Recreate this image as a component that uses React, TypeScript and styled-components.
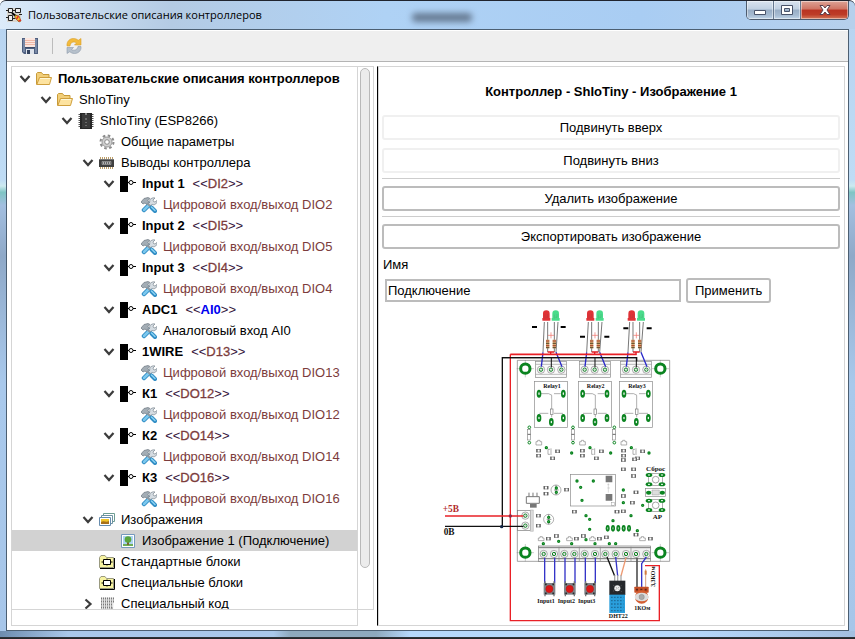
import React from 'react';
import styled, { createGlobalStyle } from 'styled-components';

const GlobalStyle = createGlobalStyle`
  *, *::before, *::after { box-sizing: border-box; }
  html, body { margin: 0; padding: 0; }
  body { font-family: "Liberation Sans", Arial, sans-serif; font-size: 13px; color: #000; }
  button, input { font: inherit; color: inherit; }
`;

/* ---------- Window frame ---------- */

const Window = styled.div`
  display: flex;
  flex-direction: column;
  height: 100vh;
  padding: 0 6px 8px;
  overflow: hidden;
  border-top: 1px solid #20242e;
  border-radius: 6px 6px 0 0;
  background:
    linear-gradient(#33363b, #1f2125) bottom / 100% 2px no-repeat,
    linear-gradient(90deg, #6d8cae 0, #a9c8ea 8%, #a9c8ea 32%, #8ea9bd 34%, #8ea9bd 44%, #b6d8fb 48%, #b6d8fb 80%, #a3bfe0 100%) bottom / 100% 8px no-repeat,
    linear-gradient(90deg, #dcebfa 0, #b4cbe4 20%, #afd2f5 45%, #a9cdf3 75%, #b6d0ec 100%) top / 100% 28px no-repeat,
    linear-gradient(#b7d3f0 0, #bfdcf5 28%, #cdeaf0 29%, #7fc5c4 30%, #a3bfe0 32%, #8fa9c8 40%, #a9c9ec 60%, #a7c6e9 100%);
`;

const TitleBar = styled.header`
  display: flex;
  align-items: flex-start;
  height: 28px;
  flex: none;
`;

const AppTitle = styled.h1`
  flex: 1;
  display: flex;
  align-items: center;
  gap: 6px;
  height: 28px;
  margin: 0;
  font: 400 11px/16px "Open Sans", "Noto Sans", sans-serif;
  white-space: nowrap;
`;

const GlassSmudge = styled.span`
  width: 60px;
  height: 9px;
  margin: 4px 0 0 144px;
  border-radius: 4px;
  background: #667a92;
  filter: blur(3px);
`;

const Caption = styled.div`
  display: flex;
  height: 19px;
  border: 1px solid #4d5b6e;
  border-top: 0;
  border-radius: 0 0 5px 5px;
  overflow: hidden;
`;

const CaptionButton = styled.button<{ $close?: boolean }>`
  display: flex;
  align-items: center;
  justify-content: center;
  width: ${p => (p.$close ? 47 : 27)}px;
  padding: 0;
  border: 0;
  border-right: ${p => (p.$close ? '0' : '1px solid #66788f')};
  box-shadow: inset 0 0 0 1px rgba(255, 255, 255, 0.45);
  background: ${p =>
    p.$close
      ? 'linear-gradient(#dda396 0, #cf7463 45%, #b93322 50%, #bd3c27 75%, #d3785a 100%)'
      : 'linear-gradient(#d9e3ef 0, #c0d0e2 45%, #98adc5 50%, #a7bcd3 80%, #c1d5e9 100%)'};
`;

const Client = styled.main`
  flex: 1;
  min-height: 0;
  display: flex;
  flex-direction: column;
  border: 1px solid #4c5f72;
  background: #fff;
`;

const Toolbar = styled.div`
  display: flex;
  align-items: center;
  gap: 13px;
  flex: none;
  height: 32px;
  padding: 0 15px;
  border-top: 1px solid #fff;
  border-bottom: 1px solid #b4b4b4;
  background: #efefef;
`;

const ToolButton = styled.button`
  display: flex;
  padding: 0;
  border: 0;
  background: none;
`;

const ToolSeparator = styled.span`
  width: 1px;
  height: 16px;
  margin: 0 0 0 1px;
  background: #bcbcbc;
`;

const Body = styled.div`
  flex: 1;
  min-height: 0;
  display: flex;
  padding: 4px 3px 4px 4px;
`;

/* ---------- Tree ---------- */

const TreePanel = styled.section`
  flex: 0 0 363px;
  min-width: 0;
  display: flex;
  flex-direction: column;
`;

const TreeScroll = styled.div`
  flex: 1;
  min-height: 0;
  display: flex;
  border: 1px solid #d5d5d5;
`;

const Tree = styled.ul`
  flex: 1;
  min-width: 0;
  margin: 0;
  padding: 1px 0 0;
  list-style: none;
  overflow: hidden;
  border-right: 1px solid #d5d5d5;
`;

const Track = styled.div`
  flex: none;
  width: 15px;
  padding: 1px 2px 41px;
`;

const Thumb = styled.div`
  height: 100%;
  width: 10px;
  border: 1px solid #b9b9b9;
  border-radius: 5px;
  background: #ececec;
`;

const TreeFooter = styled.div`
  flex: none;
  width: 347px;
  height: 16px;
  border: 1px solid #d5d5d5;
  border-top: 0;
`;

const TreeRow = styled.li<{ $level: number; $selected?: boolean }>`
  display: flex;
  align-items: center;
  height: 21px;
  padding-left: ${p => 5 + p.$level * 21}px;
  white-space: nowrap;
  background: ${p => (p.$selected ? '#d2d2d2' : 'transparent')};
`;

const Toggle = styled.button`
  display: flex;
  width: 16px;
  margin-right: 3px;
  padding: 0;
  border: 0;
  background: none;
`;

const ToggleSpace = styled.span`
  width: 19px;
`;

const Label = styled.span<{ $bold?: boolean; $linked?: boolean }>`
  margin-left: 6px;
  line-height: 21px;
  font-weight: ${p => (p.$bold ? 700 : 400)};
  color: ${p => (p.$linked ? '#7c3c3c' : '#000')};
`;

const Binding = styled.span`
  margin-left: 8px;
  line-height: 21px;
  color: #33133a;
`;

const Pin = styled.span<{ $analog?: boolean }>`
  color: ${p => (p.$analog ? '#0000f0' : '#7c3c3c')};
  font-weight: ${p => (p.$analog ? 700 : 400)};
  -webkit-text-stroke: ${p => (p.$analog ? '0' : '0.3px #7c3c3c')};
`;

/* ---------- Details ---------- */

const Details = styled.section`
  flex: 1;
  min-width: 0;
  display: flex;
  flex-direction: column;
  margin-left: 3px;
  border: 1px solid #d5d5d5;
  border-left: 1px solid #000;
  box-shadow: inset 1px 0 #d5d5d5;
  padding: 15px 4px 0;
`;

const Heading = styled.h2`
  margin: 0 0 13px;
  font-size: 13px;
  line-height: 20px;
  text-align: center;
`;

const ActionButton = styled.button<{ $muted?: boolean }>`
  flex: none;
  height: 25px;
  padding: 0 7px;
  border: 2px solid ${p => (p.$muted ? '#f0f0f0' : '#bcbcbc')};
  border-radius: 3px;
  background: #fff;
  line-height: 20px;
`;

const Stack = styled.div`
  display: flex;
  flex-direction: column;
  gap: 8px;
`;

const Rule = styled.hr`
  width: 100%;
  height: 1px;
  margin: 5px 0 7px;
  border: 0;
  background: #cdcdcd;
`;

const NameLabel = styled.label`
  margin: 6px 0 3px 1px;
  line-height: 20px;
`;

const NameRow = styled.form`
  display: flex;
  align-items: center;
  gap: 5px;
  padding-left: 3px;
`;

const NameInput = styled.input`
  flex: 0 1 296px;
  min-width: 0;
  height: 23px;
  padding: 0 1px;
  border: 2px solid #bcbcbc;
  outline: 0;
  background: #fff;
`;

const BoardBox = styled.figure`
  flex: 1;
  min-height: 0;
  display: flex;
  justify-content: center;
  align-items: flex-start;
  margin: 5px 0 0;
  overflow: hidden;
`;

/* ---------- Icons ---------- */

const Icon = ({ children }: { children: React.ReactNode }) => (
  <svg width="16" height="16" viewBox="0 0 16 16" aria-hidden="true">{children}</svg>
);

const AppIcon = () => (
  <svg width="16" height="16" viewBox="0 0 16 16" aria-hidden="true">
    <path d="M1 1h14v14H1z" fill="#d9d6d0" />
    <path d="M2.500 1.500h4v4h-4zM9.500 1.500h5v4h-5zM2.500 8.500h4v5h-4z" fill="#eee" stroke="#222" />
    <path d="M0 3.500h2M0 10.500h2M7 3.500h2M6 11.500h3M13 7.500h3" stroke="#222" />
    <path d="M6 6l5 4" stroke="#000" strokeWidth="2" />
    <path d="M9 8l4 1 2 5-2 1-4-4z" fill="#f5c22a" stroke="#6b4a10" strokeWidth=".6" />
    <path d="M10.500 12l2-3M12.500 14l2.500-1" stroke="#e3302c" strokeWidth="1.500" />
  </svg>
);

const SaveIcon = () => (
  <Icon>
    <path d="M0 0h16v16H2L0 14z" fill="#4f6080" />
    <path d="M1 1h2v13H1zM13 1h2v14h-2z" fill="#7888a5" />
    <path d="M3 0h10v9H3z" fill="#fbe6df" />
    <path d="M3 2.500h10M3 4.500h10M3 6.500h10" stroke="#f0b8a6" />
    <path d="M3 9h10v1H3z" fill="#3d4c68" />
    <path d="M4 11h8v5H4z" fill="#dfe4ec" />
    <path d="M5 12h3v4H5z" fill="#35445f" />
  </Icon>
);

const RefreshIcon = () => (
  <Icon>
    <path d="M1 8C.500 3 4 .500 7.500.500c2 0 3.500.700 4.700 1.800L15 .500V7H8.500l2-2C8 3 4.500 4 4 8z" fill="#f3ba3c" stroke="#d9a02a" strokeWidth=".6" />
    <path d="M15 8.500c.500 4.500-3 7-6.500 7-2 0-3.500-.700-4.700-1.800L1 15.500V9.500h6.500l-2 2c2.500 1.500 6 .500 6.500-3z" fill="#b6c0cb" stroke="#8e9bab" strokeWidth=".6" />
  </Icon>
);

const Chevron = ({ open }: { open: boolean }) => (
  <Icon>
    <path d={open ? 'M3.500 5l4.500 5 4.500-5' : 'M5.500 3.500L10.500 8l-5 4.500'} fill="none" stroke="#3c3c3c" strokeWidth="2.200" />
  </Icon>
);

const FolderIcon = () => (
  <Icon>
    <path d="M.500 13.500v-11l1-1h4l1.500 2H13v3" fill="#f2cf7a" stroke="#c79a38" />
    <path d="M.800 13.500L3.500 6.500h12L13.500 13.500z" fill="#fde3a0" stroke="#cf9f3d" />
    <path d="M4 7.500h10" stroke="#fff8d6" />
  </Icon>
);

const ChipIcon = () => (
  <Icon>
    <path d="M.500 1.500h2M.500 3.500h2M.500 5.500h2M.500 7.500h2M.500 9.500h2M.500 11.500h2M.500 13.500h2M13.500 1.500h2M13.500 3.500h2M13.500 5.500h2M13.500 7.500h2M13.500 9.500h2M13.500 11.500h2M13.500 13.500h2" stroke="#555" />
    <path d="M2 0h12v16H2z" fill="#272727" />
    <path d="M4 1h8v14H4z" fill="#3b3b3b" />
    <path d="M7 0h2v2H7z" fill="#888" />
    <path d="M8 5v2M8 9v1M8 12v1" stroke="#999" />
  </Icon>
);

const GearIcon = () => (
  <Icon>
    <circle cx="8" cy="8" r="6.500" fill="none" stroke="#8c8c8c" strokeWidth="2" strokeDasharray="2.600 2.500" />
    <circle cx="8" cy="8" r="5" fill="#d0d0d0" stroke="#9a9a9a" />
    <circle cx="8" cy="8" r="2.300" fill="#fff" stroke="#8c8c8c" />
  </Icon>
);

const PinsIcon = () => (
  <Icon>
    <path d="M1.500 2v12M3.500 2v12M5.500 2v12M7.500 2v12M9.500 2v12M11.500 2v12M13.500 2v12" stroke="#bd9e68" />
    <path d="M0 4h15v8H0z" fill="#3f3f3f" />
    <path d="M0 4.500h15" stroke="#777" />
    <path d="M3 6.500h9v3H3z" fill="#666" stroke="#aaa" strokeWidth=".6" />
    <path d="M4 8h1m1 0h1m1 0h1m1 0h1" stroke="#fff" />
  </Icon>
);

const PortIcon = () => (
  <Icon>
    <path d="M0 0h8v16H0z" fill="#000" />
    <path d="M8 6.500h1M13 6.500h3" stroke="#000" />
    <circle cx="11" cy="6.500" r="2" fill="#fff" stroke="#000" />
  </Icon>
);

const ToolsIcon = () => (
  <Icon>
    <path d="M9 7l-6 6" stroke="#2f8cc4" strokeWidth="4.500" strokeLinecap="round" />
    <path d="M9 7l-6 6" stroke="#7cc8ee" strokeWidth="2.500" strokeLinecap="round" />
    <path d="M14 1l-2 2 .500 1.500L14 5l1.800-1.500c.500 3-2 5-4.500 4L9 9 7 7l1.800-2C8 2.500 11 .200 14 1z" fill="#d5dce2" stroke="#7b868f" strokeWidth=".7" />
    <path d="M0 5l3-3.500L7 .500l2 1-2 2 1 2-2 2-2-1.500L2 7z" fill="#a3adb5" stroke="#6b767f" strokeWidth=".7" />
    <path d="M6 6l4 4" stroke="#8d98a1" strokeWidth="2" />
    <path d="M10.500 10.500l3.500 3.500" stroke="#2f8cc4" strokeWidth="4" strokeLinecap="round" />
    <path d="M10.500 10l3.500 3.500" stroke="#8ad2f3" strokeWidth="1.500" strokeLinecap="round" />
  </Icon>
);

const ImagesIcon = () => (
  <Icon>
    <path d="M4.500 1.500h11v8h-11z" fill="#fff" stroke="#6d9c92" />
    <path d="M2.500 3.500h11v8h-11z" fill="#fff" stroke="#6d93a2" />
    <path d="M.500 5.500h11v8H.500z" fill="#fff" stroke="#668cae" />
    <path d="M2 7h8v5H2z" fill="#f2c52a" />
    <path d="M2 10c3-2 5 1 8-1v3H2z" fill="#a8701a" />
  </Icon>
);

const ImageIcon = () => (
  <Icon>
    <path d="M1.500 1.500h13v13h-13z" fill="#fff" stroke="#7699bd" />
    <path d="M3 3h10v10H3z" fill="#aed4f2" />
    <path d="M3 11h10v2H3z" fill="#70ae55" />
    <path d="M7 9h2v3H7z" fill="#7b6237" />
    <circle cx="8" cy="6.500" r="3.300" fill="#5aa53c" />
  </Icon>
);

const BlockIcon = () => (
  <Icon>
    <path d="M.500 13.500v-10l1.500-2h4l1.500 2h7v10z" fill="#f7f3a0" stroke="#9a9a80" />
    <path d="M1 14.500h14.500V4" fill="none" stroke="#000" />
    <path d="M4.500 5.500h7v5h-7z" fill="#fff" stroke="#000" />
    <path d="M2.500 8h2M11.500 8h2M8 4.500v1M8 10.500v1" stroke="#000" />
  </Icon>
);

const CodeIcon = () => (
  <Icon>
    <path d="M2 1.500h13l-1 13-12-1z" fill="#e3e3e3" />
    <path d="M2 2.500h13M2 5.500h13M2 8.500h12M2 11.500h12M4 14.500h7" stroke="#7b7b7b" strokeWidth="2" strokeDasharray="1 1" />
    <path d="M10 14l4-3-1 4z" fill="#999" />
  </Icon>
);

/* ---------- Wiring drawing ---------- */

const BoardText = styled.text<{ $size?: number; $red?: boolean }>`
  font-family: "Liberation Serif", "Times New Roman", serif;
  font-weight: 700;
  font-size: ${p => p.$size ?? 18}px;
  fill: ${p => (p.$red ? '#b22a2a' : '#111')};
`;

const GREEN = '#0b8420';

const Ring = ({ x, y }: { x: number; y: number }) => (
  <g fill="none">
    <circle cx={x} cy={y} r="11" fill="#f6f6f6" stroke="#888" strokeWidth="2" />
    <circle cx={x} cy={y} r="5" stroke={GREEN} strokeWidth="3" />
    <path d={`M${x - 5} ${y + 5}l10-10`} stroke="#666" strokeWidth="1" />
  </g>
);

const Mount = ({ x, y }: { x: number; y: number }) => (
  <g>
    <path d={`M${x - 26} ${y}h52M${x} ${y - 26}v52`} stroke="#666" />
    <circle cx={x} cy={y} r="14" fill="#fff" stroke={GREEN} strokeWidth="9" />
  </g>
);

const Oval = ({ x, y }: { x: number; y: number }) => (
  <g>
    <ellipse cx={x} cy={y} rx="7" ry="12" fill={GREEN} />
    <ellipse cx={x} cy={y} rx="2" ry="4" fill="#fff" />
  </g>
);

const Part = ({ x, y }: { x: number; y: number }) => (
  <g>
    <rect x={x - 6} y={y - 4} width="12" height="8" fill="#fff" stroke="#888" strokeWidth="2" />
    <path d={`M${x - 5} ${y - 5}v10M${x + 5} ${y - 5}v10`} stroke="#666" strokeWidth="4" />
  </g>
);

const Via = ({ x, y }: { x: number; y: number }) => (
  <circle cx={x} cy={y} r="3" fill="#a8d5a8" stroke={GREEN} strokeWidth="4" />
);

const Led = ({ x, color }: { x: number; color: string }) => (
  <g>
    <path d={`M${x - 10} 61V41q0-10 10-10t10 10v20z`} fill={color} />
    <path d={`M${x - 12} 58h24`} stroke={color} strokeWidth="8" />
    <path d={`M${x - 4} 44v12M${x + 4} 42v10h-5`} fill="none" stroke="#555" opacity=".5" />
  </g>
);

const Resistor = ({ x }: { x: number }) => (
  <g>
    <path d={`M${x} 66v90`} stroke="#777" strokeWidth="3" />
    <rect x={x - 5} y="119" width="10" height="26" fill="#d8a873" />
    <path d={`M${x - 5} 123h10M${x - 5} 137h10`} stroke="#a03d27" strokeWidth="3" />
    <path d={`M${x - 5} 130h10M${x - 5} 143h10`} stroke="#574527" strokeWidth="3" />
  </g>
);

type RelayProps = { x: number; led: number; name: string; dash: [number, number, number]; screw: number };

const Relay = ({ x, led, name, dash, screw }: RelayProps) => (
  <g>
    <path d={`M${led - 6} 66L${screw + 6} 157M${led + 35} 66L${screw + 45} 157`} fill="none" stroke="#777" strokeWidth="3" />
    <Resistor x={led + 4} />
    <Resistor x={led + 24} />
    <Led x={led} color="#e03236" />
    <Led x={led + 28} color="#49dc8b" />
    <path d={`M${dash[0]} ${dash[2]}h15M${dash[1]} ${dash[2]}h15`} stroke="#000" strokeWidth="6" />
    <path d={`M${led + 5} 106h18M${led + 14} 97v18`} stroke="#ee6a60" strokeWidth="2" />
    <path d={`M${led + 4} 156h20M${led + 13} 157v7`} stroke="#e01b22" strokeWidth="4" />
    <rect x={screw - 16} y="185" width="93" height="48" fill="#fafafa" stroke="#888" strokeWidth="2" />
    <path d={`M${screw - 16} 193h93M${screw - 16} 223h93`} stroke="#999" strokeWidth="2" />
    <Ring x={screw} y={209} />
    <Ring x={screw + 30} y={209} />
    <Ring x={screw + 61} y={209} />
    <path d={`M${screw + 6} 157l-5 43M${screw + 45} 157l18 43`} stroke="#2929c9" strokeWidth="4" />
    <path d={`M${screw + 31} 173v29`} stroke="#111" strokeWidth="3" />
    <rect x={x} y="244" width="99" height="138" fill="#fff" stroke="#888" strokeWidth="2" />
    <BoardText x={x + 52} y="263" textAnchor="middle">{name}</BoardText>
    <path d={`M${x + 18} 281h24l10 5M${x + 58} 281h20M${x + 51} 286v66M${x + 14} 340h27M${x + 58} 340h27`} fill="none" stroke="#888" strokeWidth="2" />
    <rect x={x + 47} y="327" width="8" height="17" fill="#fff" stroke="#777" strokeWidth="2" />
    <Oval x={x + 13} y={281} />
    <Oval x={x + 86} y={281} />
    <Oval x={x + 13} y={354} />
    <Oval x={x + 50} y={366} />
    <Oval x={x + 86} y={354} />
    <rect x={x - 21} y="388" width="9" height="32" fill="#fff" stroke="#888" strokeWidth="2" />
    <path d={`M${x - 21} 403h9`} stroke="#666" strokeWidth="3" />
    <circle cx={x - 16} cy="382" r="4" fill="#fff" stroke={GREEN} strokeWidth="3" />
    <circle cx={x - 16} cy="428" r="4" fill="#fff" stroke={GREEN} strokeWidth="3" />
    <path d={`M${x + 4} 425v10h17v-10h-5v-4h-7v4zM${x + 46} 448h-6v15h6M${x + 49} 445v20`} fill="none" stroke="#888" strokeWidth="2" />
    <Part x={x + 12} y={452} />
    <Part x={x + 12} y={467} />
    <Part x={x + 69} y={454} />
    <Part x={x + 54} y={475} />
    <Via x={x + 35} y={443} />
  </g>
);

const InputKey = ({ x, label }: { x: number; label: string }) => (
  <g>
    <path d={`M${x - 14} 293v76M${x + 16} 293v76`} stroke="#3434c8" strokeWidth="4" />
    <path d={`M${x - 13} 364v45M${x + 14} 364v45`} stroke="#777" strokeWidth="4" />
    <rect x={x - 17} y="369" width="35" height="35" fill="#80858a" />
    <path d={`M${x - 13} 373h5M${x + 9} 373h5M${x - 13} 400h5M${x + 9} 400h5`} stroke="#2b2b2b" strokeWidth="5" />
    <circle cx={x} cy="387" r="11" fill="#db1717" stroke="#941616" />
    <BoardText x={x - 10} y="428" textAnchor="middle">{label}</BoardText>
  </g>
);

const TactKey = ({ y }: { y: number }) => (
  <g>
    <rect x="656" y={y - 18} width="41" height="36" fill="#fff" stroke="#888" strokeWidth="2" />
    <circle cx="677" cy={y} r="10" fill="#fff" stroke="#777" strokeWidth="2" />
    {[657, 696].map(x => (
      <g key={x} fill={GREEN}>
        <ellipse cx={x} cy={y - 14} rx="10" ry="6" />
        <ellipse cx={x} cy={y + 14} rx="10" ry="6" />
        <path d={`M${x - 3} ${y - 14}h6M${x - 3} ${y + 14}h6`} stroke="#fff" strokeWidth="3" />
      </g>
    ))}
  </g>
);

const parts: [number, number][] = [
  [348, 83], [348, 101], [410, 89], [580, 28], [611, 28], [611, 48], [618, 97], [580, 108],
  [607, 128], [561, 155], [580, 154], [433, 155], [325, 167], [325, 197], [355, 236], [379, 228],
  [439, 236], [460, 228], [508, 236], [529, 232], [618, 224], [661, 236],
  [580, 0], [614, -2],
];

const vias: [number, number][] = [
  [441, 63], [490, 63], [452, 82], [456, 121], [580, 90], [580, 128], [638, 136], [603, 167],
  [468, 167], [479, 178], [549, 182], [479, 208], [622, 212], [386, 244], [340, 251], [425, 251],
  [468, 239], [495, 251], [538, 251], [557, 251],
];

const BoardDrawing = () => (
  <svg width="344" height="316" viewBox="439 308 344 316" role="img" aria-label="Подключение">
    <g transform="translate(430 300) scale(0.33333)" fill="none">
      <path d="M262 784V181h457v603z" fill="#fff" stroke="#777" strokeWidth="2" />
      <path d="M241 163v799h447V797h-43" stroke="#e92026" strokeWidth="4" />
      <path d="M217 680V173h403v12" stroke="#111" strokeWidth="4" />
      <Mount x={286} y={206} />
      <Mount x={691} y={206} />
      <Relay x={314} led={349} name="Relay1" dash={[306, 392, 81]} screw={333} />
      <Relay x={445} led={481} name="Relay2" dash={[450, 523, 110]} screw={464} />
      <Relay x={569} led={605} name="Relay3" dash={[580, 650, 85]} screw={588} />
      <Via x={425} y={459} />
      <Via x={542} y={459} />
      <Via x={657} y={459} />
      <path d="M217 173h403" stroke="#111" strokeWidth="4" />
      <path d="M241 163h379" stroke="#e92026" strokeWidth="5" />
    </g>
    <g transform="translate(430 460) scale(0.33333)" fill="none">
      <BoardText x="38" y="155" $size={28} $red>+5В</BoardText>
      <BoardText x="41" y="225" $size={28}>0В</BoardText>
      <rect x="263" y="151" width="38" height="61" fill="#fff" stroke="#777" strokeWidth="2" />
      <path d="M301 150h9v64h-9z" fill="#ddd" stroke="#888" />
      <Ring x={286} y={167} />
      <Ring x={286} y={197} />
      <path d="M45 168h235" stroke="#e92026" strokeWidth="4" />
      <path d="M45 199h235" stroke="#111" strokeWidth="4" />
      <circle cx="241" cy="168" r="5" fill="#8c2848" />
      <circle cx="215" cy="200" r="5" fill="#132747" />
      <path d="M289 110h39v20h-39zM297 110V98M309 110V98M321 110V98" stroke="#777" strokeWidth="3" />
      <path d="M300 132h20v11h-20z" fill="#777" />
      <circle cx="378" cy="90" r="15" stroke="#888" strokeWidth="2" />
      <circle cx="356" cy="178" r="15" stroke="#888" strokeWidth="2" />
      <path d="M372 90h14M350 178h14M378 75v30M356 163v30" stroke="#666" strokeWidth="2" />
      <Via x={379} y={84} />
      <Via x={379} y={97} />
      <Via x={356} y={172} />
      <Via x={356} y={185} />
      <rect x="421" y="43" width="135" height="95" fill="#fff" stroke="#888" strokeWidth="2" />
      <path d="M527 47h20v20h-20zM527 102h20v20h-20z" fill="#777" />
      <path d="M535 70v28M532 74h6M532 84h8" stroke="#999" />
      <rect x="544" y="127" width="9" height="9" stroke="#777" />
      {parts.map(([x, y]) => <Part key={`${x}-${y}`} x={x} y={y} />)}
      {vias.map(([x, y]) => <Via key={`${x}-${y}`} x={x} y={y} />)}
      {[533, 549, 565, 581, 597].map(x => (
        <g key={x}>
          <ellipse cx={x} cy="205" rx="6" ry="10" fill={GREEN} />
          <path d={`M${x} 202v6`} stroke="#fff" strokeWidth="2" />
        </g>
      ))}
      {[325, 410, 479, 629].map(x => (
        <path key={x} d={`M${x} 234v8h17v-8h-5v-4h-7v4z`} stroke="#888" strokeWidth="2" />
      ))}
      <BoardText x="677" y="33" $size={21} textAnchor="middle">Сброс</BoardText>
      <TactKey y={59} />
      <rect x="647" y="86" width="59" height="23" fill="#fff" stroke="#888" strokeWidth="2" />
      <path d="M666 90h22v15h-22z" fill="#ddd" stroke="#777" />
      <ellipse cx="656" cy="98" rx="8" ry="6" fill={GREEN} />
      <ellipse cx="697" cy="98" rx="8" ry="6" fill={GREEN} />
      <TactKey y={136} />
      <BoardText x="682" y="176" $size={21} textAnchor="middle">АР</BoardText>
      <Mount x={286} y={278} />
      <Mount x={691} y={278} />
      <rect x="325" y="258" width="337" height="46" fill="#f2f2f2" stroke="#777" strokeWidth="2" />
      <path d="M325 263h337M325 296h337" stroke="#777" strokeWidth="3" />
      <path d="M387 260v43M448 260v43M511 260v43M603 260v43" stroke="#888" strokeWidth="2" />
      {[341, 372, 403, 433, 464, 495, 526, 557, 588, 618, 649].map(x => <Ring key={x} x={x} y={282} />)}
      <InputKey x={358} label="Input1" />
      <InputKey x={419} label="Input2" />
      <InputKey x={480} label="Input3" />
      <path d="M531 291l23 57" stroke="#111" strokeWidth="4" />
      <path d="M557 291l6 57" stroke="#3434c8" strokeWidth="4" />
      <path d="M588 293l-15 55" stroke="#ee9a72" strokeWidth="4" />
      <path d="M554 346v18M563 346v18M573 346v18" stroke="#aaa" strokeWidth="4" />
      <rect x="538" y="362" width="48" height="43" fill="#25282b" />
      <circle cx="562" cy="385" r="9" fill="#eee" />
      <path d="M549 375l26 20M549 394l26-18" stroke="#777" strokeWidth="2" strokeDasharray="3 3" />
      <rect x="538" y="404" width="47" height="55" fill="#2a9fdc" />
      <path d="M543 412h37M543 422h37M543 432h37M543 442h37M543 452h37" stroke="#1d6f9e" strokeWidth="4" strokeDasharray="5 4" />
      <BoardText x="565" y="475" textAnchor="middle">DHT22</BoardText>
      <path d="M621 293v90" stroke="#555" strokeWidth="5" />
      <path d="M649 291l-14 20v72" stroke="#3434c8" strokeWidth="4" />
      <path d="M647 328v60" stroke="#c66f41" strokeWidth="2" />
      <path d="M647 332v12" stroke="#d47b3f" strokeWidth="6" />
      <rect x="613" y="380" width="43" height="18" rx="2" fill="#c65027" />
      <path d="M618 389h6M631 389h6M644 389h6" stroke="#612415" strokeWidth="5" />
      <circle cx="635" cy="411" r="20" fill="#d45e32" />
      <ellipse cx="635" cy="411" rx="21" ry="13" fill="#ddd" />
      <circle cx="635" cy="411" r="8" fill="#aaa" stroke="#777" />
      <BoardText x="637" y="449" textAnchor="middle">1КОм</BoardText>
      <BoardText x="0" y="0" textAnchor="middle" transform="translate(675 350) rotate(-90)">3,3КОм</BoardText>
    </g>
  </svg>
);

/* ---------- Data ---------- */

type Node = {
  level: number;
  icon: () => React.ReactElement;
  text: string;
  bold?: boolean;
  linked?: boolean;
  pin?: string;
  analog?: boolean;
  open?: boolean;
  selected?: boolean;
};

const pins: [string, string, string][] = [
  ['Input 1', 'DI2', 'Цифровой вход/выход DIO2'],
  ['Input 2', 'DI5', 'Цифровой вход/выход DIO5'],
  ['Input 3', 'DI4', 'Цифровой вход/выход DIO4'],
  ['ADC1', 'AI0', 'Аналоговый вход AI0'],
  ['1WIRE', 'D13', 'Цифровой вход/выход DIO13'],
  ['К1', 'DO12', 'Цифровой вход/выход DIO12'],
  ['К2', 'DO14', 'Цифровой вход/выход DIO14'],
  ['К3', 'DO16', 'Цифровой вход/выход DIO16'],
];

const nodes: Node[] = [
  { level: 0, icon: FolderIcon, text: 'Пользовательские описания контроллеров', bold: true, open: true },
  { level: 1, icon: FolderIcon, text: 'ShIoTiny', open: true },
  { level: 2, icon: ChipIcon, text: 'ShIoTiny (ESP8266)', open: true },
  { level: 3, icon: GearIcon, text: 'Общие параметры' },
  { level: 3, icon: PinsIcon, text: 'Выводы контроллера', open: true },
  ...pins.flatMap(([text, pin, detail]): Node[] => [
    { level: 4, icon: PortIcon, text, pin, bold: true, open: true, analog: pin === 'AI0' },
    { level: 5, icon: ToolsIcon, text: detail, linked: pin !== 'AI0' },
  ]),
  { level: 3, icon: ImagesIcon, text: 'Изображения', open: true },
  { level: 4, icon: ImageIcon, text: 'Изображение 1 (Подключение)', selected: true },
  { level: 3, icon: BlockIcon, text: 'Стандартные блоки' },
  { level: 3, icon: BlockIcon, text: 'Специальные блоки' },
  { level: 3, icon: CodeIcon, text: 'Специальный код', open: false },
];

export default function App() {
  return (
    <>
      <GlobalStyle />
      <Window>
        <TitleBar>
          <AppTitle>
            <AppIcon />
            Пользовательские описания контроллеров
            <GlassSmudge />
          </AppTitle>
          <Caption>
            <CaptionButton type="button" aria-label="Свернуть">
              <svg width="14" height="12" viewBox="0 0 14 12"><path d="M1.500 6.500h11v4h-11z" fill="#fff" stroke="#49536a" /></svg>
            </CaptionButton>
            <CaptionButton type="button" aria-label="Развернуть">
              <svg width="14" height="12" viewBox="0 0 14 12"><path d="M1.500 1.500h11v9h-11zM4.500 4.500h5v3h-5z" fill="#fff" fillRule="evenodd" stroke="#49536a" /></svg>
            </CaptionButton>
            <CaptionButton type="button" $close aria-label="Закрыть">
              <svg width="14" height="12" viewBox="0 0 14 12"><path d="M2 1.500h3l2 2.500 2-2.500h3L9 6l3 4.500H9L7 8l-2 2.500H2L5 6z" fill="#fff" stroke="#5a3f4b" /></svg>
            </CaptionButton>
          </Caption>
        </TitleBar>
        <Client>
          <Toolbar>
            <ToolButton type="button" aria-label="Сохранить"><SaveIcon /></ToolButton>
            <ToolSeparator />
            <ToolButton type="button" aria-label="Обновить"><RefreshIcon /></ToolButton>
          </Toolbar>
          <Body>
            <TreePanel>
              <TreeScroll>
                <Tree role="tree">
                  {nodes.map((n, i) => (
                    <TreeRow key={i} role="treeitem" aria-selected={!!n.selected} $level={n.level} $selected={n.selected}>
                      {n.open === undefined ? <ToggleSpace /> : (
                        <Toggle type="button" aria-label={n.open ? 'Свернуть' : 'Развернуть'}><Chevron open={n.open} /></Toggle>
                      )}
                      <n.icon />
                      <Label $bold={n.bold} $linked={n.linked}>{n.text}</Label>
                      {n.pin && <Binding>&lt;&lt;<Pin $analog={n.analog}>{n.pin}</Pin>&gt;&gt;</Binding>}
                    </TreeRow>
                  ))}
                </Tree>
                <Track><Thumb /></Track>
              </TreeScroll>
              <TreeFooter />
            </TreePanel>
            <Details>
              <Heading>Контроллер - ShIoTiny - Изображение 1</Heading>
              <Stack>
                <ActionButton type="button" $muted>Подвинуть вверх</ActionButton>
                <ActionButton type="button" $muted>Подвинуть вниз</ActionButton>
              </Stack>
              <Rule />
              <ActionButton type="button">Удалить изображение</ActionButton>
              <Rule />
              <ActionButton type="button">Экспортировать изображение</ActionButton>
              <NameLabel htmlFor="image-name">Имя</NameLabel>
              <NameRow onSubmit={e => e.preventDefault()}>
                <NameInput id="image-name" defaultValue="Подключение" />
                <ActionButton type="submit">Применить</ActionButton>
              </NameRow>
              <BoardBox><BoardDrawing /></BoardBox>
            </Details>
          </Body>
        </Client>
      </Window>
    </>
  );
}
